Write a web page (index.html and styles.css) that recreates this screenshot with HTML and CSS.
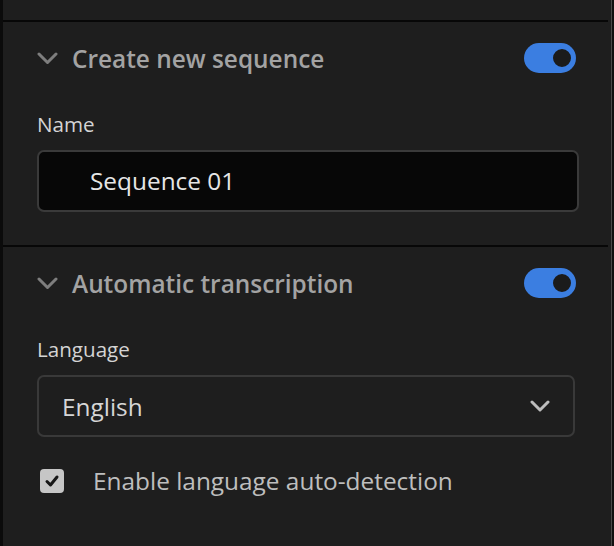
FILE: index.html
```html
<!DOCTYPE html>
<html>
<head lang="en">
    <meta charset="UTF-8">
    <title>Sequence settings</title>
    <link rel="stylesheet" href="styles.css">
</head>
<body>
<div class="frame">
    <div class="panel">
        <div class="top-strip"></div>

        <section class="group">
            <div class="group-head">
                <svg class="caret" width="21" height="13" viewBox="0 0 21 13">
                    <path d="M2 2 L10.5 10.5 L19 2" fill="none" stroke="#7e7e7e" stroke-width="3" stroke-linecap="round" stroke-linejoin="round"/>
                </svg>
                <span class="group-title">Create new sequence</span>
                <span class="toggle on"><span class="knob"></span></span>
            </div>
            <div class="field-label">Name</div>
            <div class="text-input">Sequence 01</div>
        </section>

        <section class="group last">
            <div class="group-head">
                <svg class="caret" width="21" height="13" viewBox="0 0 21 13">
                    <path d="M2 2 L10.5 10.5 L19 2" fill="none" stroke="#7e7e7e" stroke-width="3" stroke-linecap="round" stroke-linejoin="round"/>
                </svg>
                <span class="group-title">Automatic transcription</span>
                <span class="toggle on"><span class="knob"></span></span>
            </div>
            <div class="field-label">Language</div>
            <div class="select">
                <span>English</span>
                <svg width="20" height="12" viewBox="0 0 20 12">
                    <path d="M2 2 L10 10 L18 2" fill="none" stroke="#bdbdbd" stroke-width="3" stroke-linecap="round" stroke-linejoin="round"/>
                </svg>
            </div>
            <div class="check-row">
                <span class="check">
                    <svg width="16" height="14" viewBox="0 0 16 14">
                        <path d="M3 7.5 L6.5 11 L13 3" fill="none" stroke="#161616" stroke-width="3" stroke-linecap="round" stroke-linejoin="round"/>
                    </svg>
                </span>
                <span class="check-text">Enable language auto-detection</span>
            </div>
        </section>
    </div>
    <div class="rail"><span class="rail-line"></span></div>
</div>
</body>
</html>
```

FILE: styles.css
```css
body{ margin: 0; padding: 0; background: #1e1e1e; font-family: "Open Sans", "Noto Sans", sans-serif; }
.frame{ display: flex; height: 546px; border-left: 3px solid #0b0b0b; overflow: hidden; }
.panel{ flex: 1; background: #1e1e1e; }
.top-strip{ height: 20px; border-bottom: 2px solid #070707; }

.group{ height: 225px; box-sizing: border-box; padding: 21px 29px 0 34px; border-bottom: 2px solid #070707; }
.group.last{ border-bottom: none; }
.group-head{ display: flex; align-items: center; height: 30px; }
.caret{ flex: none; display: block; margin-right: 14px; }
.group-title{ flex: 1; font-size: 24.4px; font-weight: 600; color: #a3a3a3; }
.toggle{ position: relative; width: 52px; height: 30px; border-radius: 15px; background: #3b7ee1; margin-right: 3px; }
.toggle .knob{ position: absolute; right: 3px; top: 4px; width: 18px; height: 18px; border-radius: 50%; border: 2px solid #3b7ee1; background: #1b1b1b; }

.field-label{ margin-top: 38px; margin-bottom: 13px; height: 26px; line-height: 26px; font-size: 20.6px; color: #d4d4d4; }

.text-input{ height: 62px; box-sizing: border-box; border: 2px solid #3a3a3a; border-radius: 7px; background: #070707; padding-left: 51px; line-height: 57px; font-size: 24.4px; color: #e6e6e6; }

.select{ display: flex; align-items: center; justify-content: space-between; height: 62px; box-sizing: border-box; margin-right: 4px; border: 2px solid #393939; border-radius: 7px; padding: 0 23px; font-size: 24.4px; color: #d6d6d6; }
.select svg{ display: block; }

.check-row{ display: flex; align-items: center; height: 28px; margin-top: 30px; }
.check{ display: flex; align-items: center; justify-content: center; width: 24px; height: 24px; margin-left: 3px; margin-right: 29px; border-radius: 4px; background: #c6c6c6; }
.check svg{ display: block; }
.check-text{ font-size: 24.4px; line-height: 28px; color: #bebebe; }

.rail{ width: 6px; background: #1e1e1e; }
.rail-line{ display: block; width: 1px; height: 100%; margin-left: 3px; background: #4a4a4a; border-right: 2px solid #111111; }
```
